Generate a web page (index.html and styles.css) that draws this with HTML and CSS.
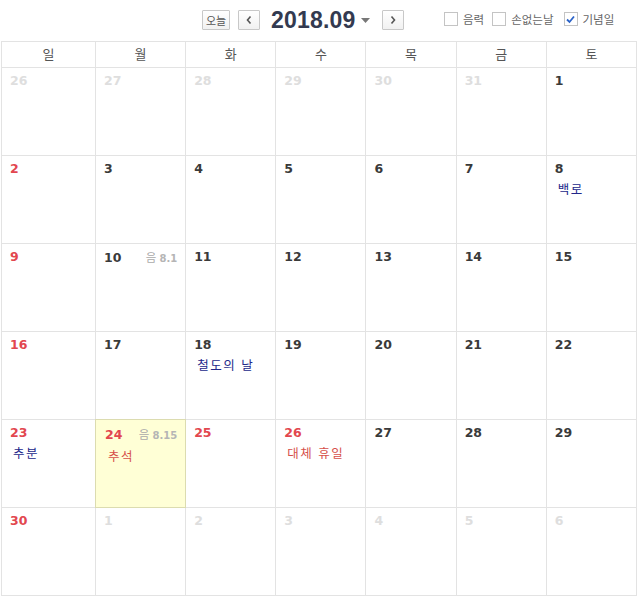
FILE: index.html
```html
<!DOCTYPE html>
<html lang="ko">
<head>
<meta charset="utf-8">
<link rel="stylesheet" href="styles.css">
</head>
<body>
<div class="page">
  <div class="toolbar">
    <div class="nav">
      <button class="btn today">오늘</button>
      <button class="btn arrow"><svg width="8" height="10" viewBox="0 0 8 10"><path d="M5.5 1.5 L2.5 5 L5.5 8.5" fill="none" stroke="#555" stroke-width="1.6"/></svg></button>
      <span class="month">2018.09</span>
      <svg class="caret" width="9" height="5" viewBox="0 0 9 5"><path d="M0 0 H9 L4.5 5 Z" fill="#777"/></svg>
      <button class="btn arrow next"><svg width="8" height="10" viewBox="0 0 8 10"><path d="M2.5 1.5 L5.5 5 L2.5 8.5" fill="none" stroke="#555" stroke-width="1.6"/></svg></button>
    </div>
    <div class="opts">
      <label class="opt"><span class="box"></span>음력</label>
      <label class="opt"><span class="box"></span>손없는날</label>
      <label class="opt"><span class="box on"><svg width="11" height="11" viewBox="0 0 11 11"><path d="M2 5.5 L4.5 8 L9 2.5" fill="none" stroke="#2b63c8" stroke-width="1.8"/></svg></span>기념일</label>
    </div>
  </div>
  <div class="cal">
    <div class="wd">일</div><div class="wd">월</div><div class="wd">화</div><div class="wd">수</div><div class="wd">목</div><div class="wd">금</div><div class="wd">토</div>

    <div class="cell"><span class="num other">26</span></div>
    <div class="cell"><span class="num other">27</span></div>
    <div class="cell"><span class="num other">28</span></div>
    <div class="cell"><span class="num other">29</span></div>
    <div class="cell"><span class="num other">30</span></div>
    <div class="cell"><span class="num other">31</span></div>
    <div class="cell"><span class="num">1</span></div>

    <div class="cell"><span class="num red">2</span></div>
    <div class="cell"><span class="num">3</span></div>
    <div class="cell"><span class="num">4</span></div>
    <div class="cell"><span class="num">5</span></div>
    <div class="cell"><span class="num">6</span></div>
    <div class="cell"><span class="num">7</span></div>
    <div class="cell"><span class="num">8</span><div class="ev blue">백로</div></div>

    <div class="cell"><span class="num red">9</span></div>
    <div class="cell"><div class="top"><span class="num">10</span><span class="lunar">음 <b>8.1</b></span></div></div>
    <div class="cell"><span class="num">11</span></div>
    <div class="cell"><span class="num">12</span></div>
    <div class="cell"><span class="num">13</span></div>
    <div class="cell"><span class="num">14</span></div>
    <div class="cell"><span class="num">15</span></div>

    <div class="cell"><span class="num red">16</span></div>
    <div class="cell"><span class="num">17</span></div>
    <div class="cell"><span class="num">18</span><div class="ev blue">철도의 날</div></div>
    <div class="cell"><span class="num">19</span></div>
    <div class="cell"><span class="num">20</span></div>
    <div class="cell"><span class="num">21</span></div>
    <div class="cell"><span class="num">22</span></div>

    <div class="cell"><span class="num red">23</span><div class="ev blue">추분</div></div>
    <div class="cell today-cell"><div class="top"><span class="num red">24</span><span class="lunar">음 <b>8.15</b></span></div><div class="ev red">추석</div></div>
    <div class="cell"><span class="num red">25</span></div>
    <div class="cell"><span class="num red">26</span><div class="ev red">대체 휴일</div></div>
    <div class="cell"><span class="num">27</span></div>
    <div class="cell"><span class="num">28</span></div>
    <div class="cell"><span class="num">29</span></div>

    <div class="cell"><span class="num red">30</span></div>
    <div class="cell"><span class="num other">1</span></div>
    <div class="cell"><span class="num other">2</span></div>
    <div class="cell"><span class="num other">3</span></div>
    <div class="cell"><span class="num other">4</span></div>
    <div class="cell"><span class="num other">5</span></div>
    <div class="cell"><span class="num other">6</span></div>
  </div>
</div>
</body>
</html>
```

FILE: styles.css
```css
* { box-sizing: border-box; }
html, body { margin: 0; padding: 0; background: #fff; }
body { font-family: "Noto Sans CJK KR", "Noto Sans", sans-serif; color: #333; }
.page { width: 640px; padding-left: 1px; }
.toolbar {
  height: 41px;
  position: relative;
}
.nav {
  position: absolute;
  left: 201px;
  top: 10px;
  display: flex;
  align-items: center;
}
.btn {
  height: 20px;
  border: 1px solid #c8c8c8;
  background: linear-gradient(#fff, #f1f1f1);
  padding: 0;
  margin: 0;
  display: flex;
  align-items: center;
  justify-content: center;
  font-family: "Noto Sans CJK KR", sans-serif;
  font-size: 11px;
  color: #555;
  border-radius: 1px;
}
.today { width: 28px; }
.arrow { width: 22px; margin-left: 8px; }
.month {
  font-family: "Liberation Sans", Arial, sans-serif;
  font-weight: bold;
  font-size: 23px;
  color: #333a50;
  margin-left: 11px;
  line-height: 20px;
  letter-spacing: 0.2px;
}
.caret { margin-left: 5px; margin-top: 1px; }
.next { margin-left: 12px; }
.opts {
  position: absolute;
  left: 443px;
  top: 11px;
  display: flex;
  align-items: center;
  font-size: 11.5px;
  color: #666;
}
.opt { display: flex; align-items: center; margin-right: 8px; }
.opt:last-child { margin-left: 2px; }
.box {
  width: 14px; height: 14px;
  border: 1px solid #c4c4c4;
  background: #fff;
  margin-right: 5px;
  display: flex; align-items: center; justify-content: center;
}
.cal {
  width: 636px;
  display: grid;
  grid-template-columns: 94px repeat(6, 1fr);
  grid-template-rows: 26px repeat(6, 88px);
  border-top: 1px solid #e3e3e3;
  border-left: 1px solid #e3e3e3;
}
.wd {
  border-right: 1px solid #e3e3e3;
  border-bottom: 1px solid #e3e3e3;
  text-align: center;
  font-size: 13px;
  line-height: 24px;
  color: #555;
  background: #fff;
}
.cell {
  border-right: 1px solid #e3e3e3;
  border-bottom: 1px solid #e3e3e3;
  padding: 4px 8px 0 8px;
  font-size: 12.5px;
  line-height: 18px;
}
.today-cell { background: #ffffd6; border: 1px solid #dcdcb0; margin: -1px 0 0 -1px; padding: 5px 8px 0 9px; }
.top { display: flex; justify-content: space-between; align-items: baseline; }
.num {
  display: block;
  font-family: "DejaVu Sans", Verdana, sans-serif;
  font-weight: bold;
  font-size: 12.5px;
  line-height: 18px;
  color: #3a3a3a;
}
.num.red { color: #e2474f; }
.num.other { color: #dedede; }
.lunar {
  font-size: 11.5px;
  color: #aaa;
}
.lunar b { font-family: "DejaVu Sans", sans-serif; font-size: 10px; font-weight: bold; color: #b5b5b5; }
.ev {
  font-size: 12.5px;
  letter-spacing: 1.5px;
  padding-left: 3px;
  margin-top: 2px;
  line-height: 18px;
}
.ev.blue { color: #22288a; }
.ev.red { color: #d6504a; }
```
